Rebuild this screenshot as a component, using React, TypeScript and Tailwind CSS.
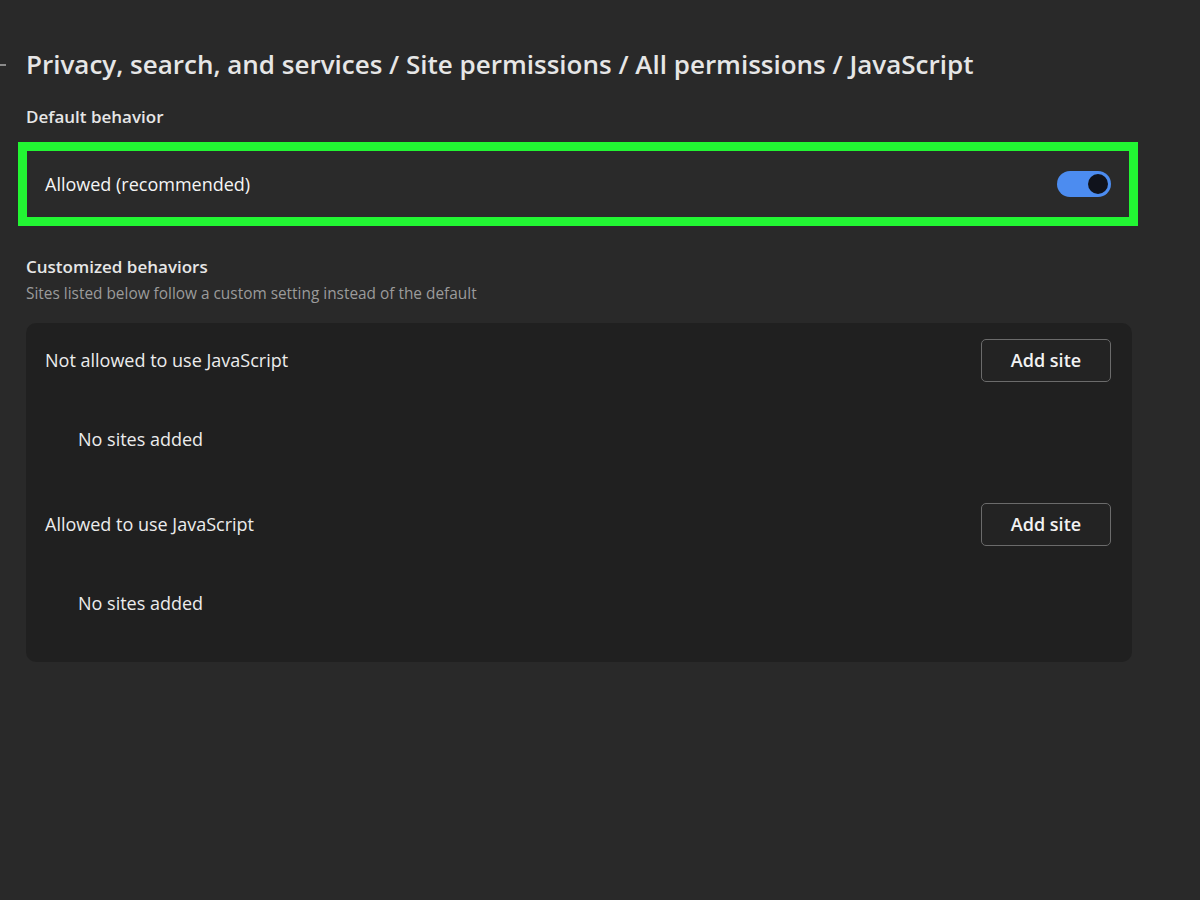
const font = { fontFamily: '"Open Sans", "Noto Sans", sans-serif' };

function Toggle() {
  return (
    <div className="flex h-[26px] w-[54px] items-center justify-end rounded-full bg-[#4c8cf0] px-[3px]">
      <div className="h-[20px] w-[20px] rounded-full bg-[#10131c]" />
    </div>
  );
}

function AddButton() {
  return (
    <button className="flex h-[43px] w-[130px] items-center justify-center rounded-[5px] border border-[#6b6b6b] bg-[#232323] text-[18px] font-semibold text-[#f2f2f2]">
      Add site
    </button>
  );
}

function SiteGroup({ title, last }: { title: string; last?: boolean }) {
  return (
    <div>
      <div className="flex items-center justify-between pl-[19px] pr-[21px] pt-[16px]">
        <span className="text-[18px] text-[#ececec]">{title}</span>
        <AddButton />
      </div>
      <div className={"pl-[52px] pt-[44px] text-[18px] text-[#ececec] " + (last ? "pb-[45px]" : "pb-[34px]")}>
        No sites added
      </div>
    </div>
  );
}

export default function App() {
  return (
    <div className="min-h-[900px] w-[1200px] bg-[#292929] text-white" style={font}>
      <div className="relative pl-[26px] pt-[46px]">
        <div className="absolute left-0 top-[64px] h-[2px] w-[6px] bg-[#8a8a8a]" />
        <h1 className="text-[26px] font-semibold leading-[36px] text-[#e6e6e6]">
          Privacy, search, and services / Site permissions / All permissions / JavaScript
        </h1>
        <div className="mt-[24px] text-[17px] font-semibold leading-[22px] text-[#e6e6e6]">Default behavior</div>
      </div>

      <div className="ml-[18px] mt-[14px] w-[1120px] border-[9px] border-[#22f533] bg-[#2a2a2a]">
        <div className="flex h-[66px] items-center justify-between pl-[18px] pr-[18px]">
          <span className="text-[18px] text-[#f5f5f5]">Allowed (recommended)</span>
          <Toggle />
        </div>
      </div>

      <div className="pl-[26px] pt-[30px]">
        <div className="text-[17px] font-semibold leading-[22px] text-[#e6e6e6]">Customized behaviors</div>
        <div className="mt-[6px] text-[15.4px] leading-[20px] text-[#9b9b9b]">
          Sites listed below follow a custom setting instead of the default
        </div>
        <div className="mt-[19px] w-[1106px] rounded-[10px] bg-[#202020]">
          <SiteGroup title="Not allowed to use JavaScript" />
          <SiteGroup title="Allowed to use JavaScript" last />
        </div>
      </div>
    </div>
  );
}
